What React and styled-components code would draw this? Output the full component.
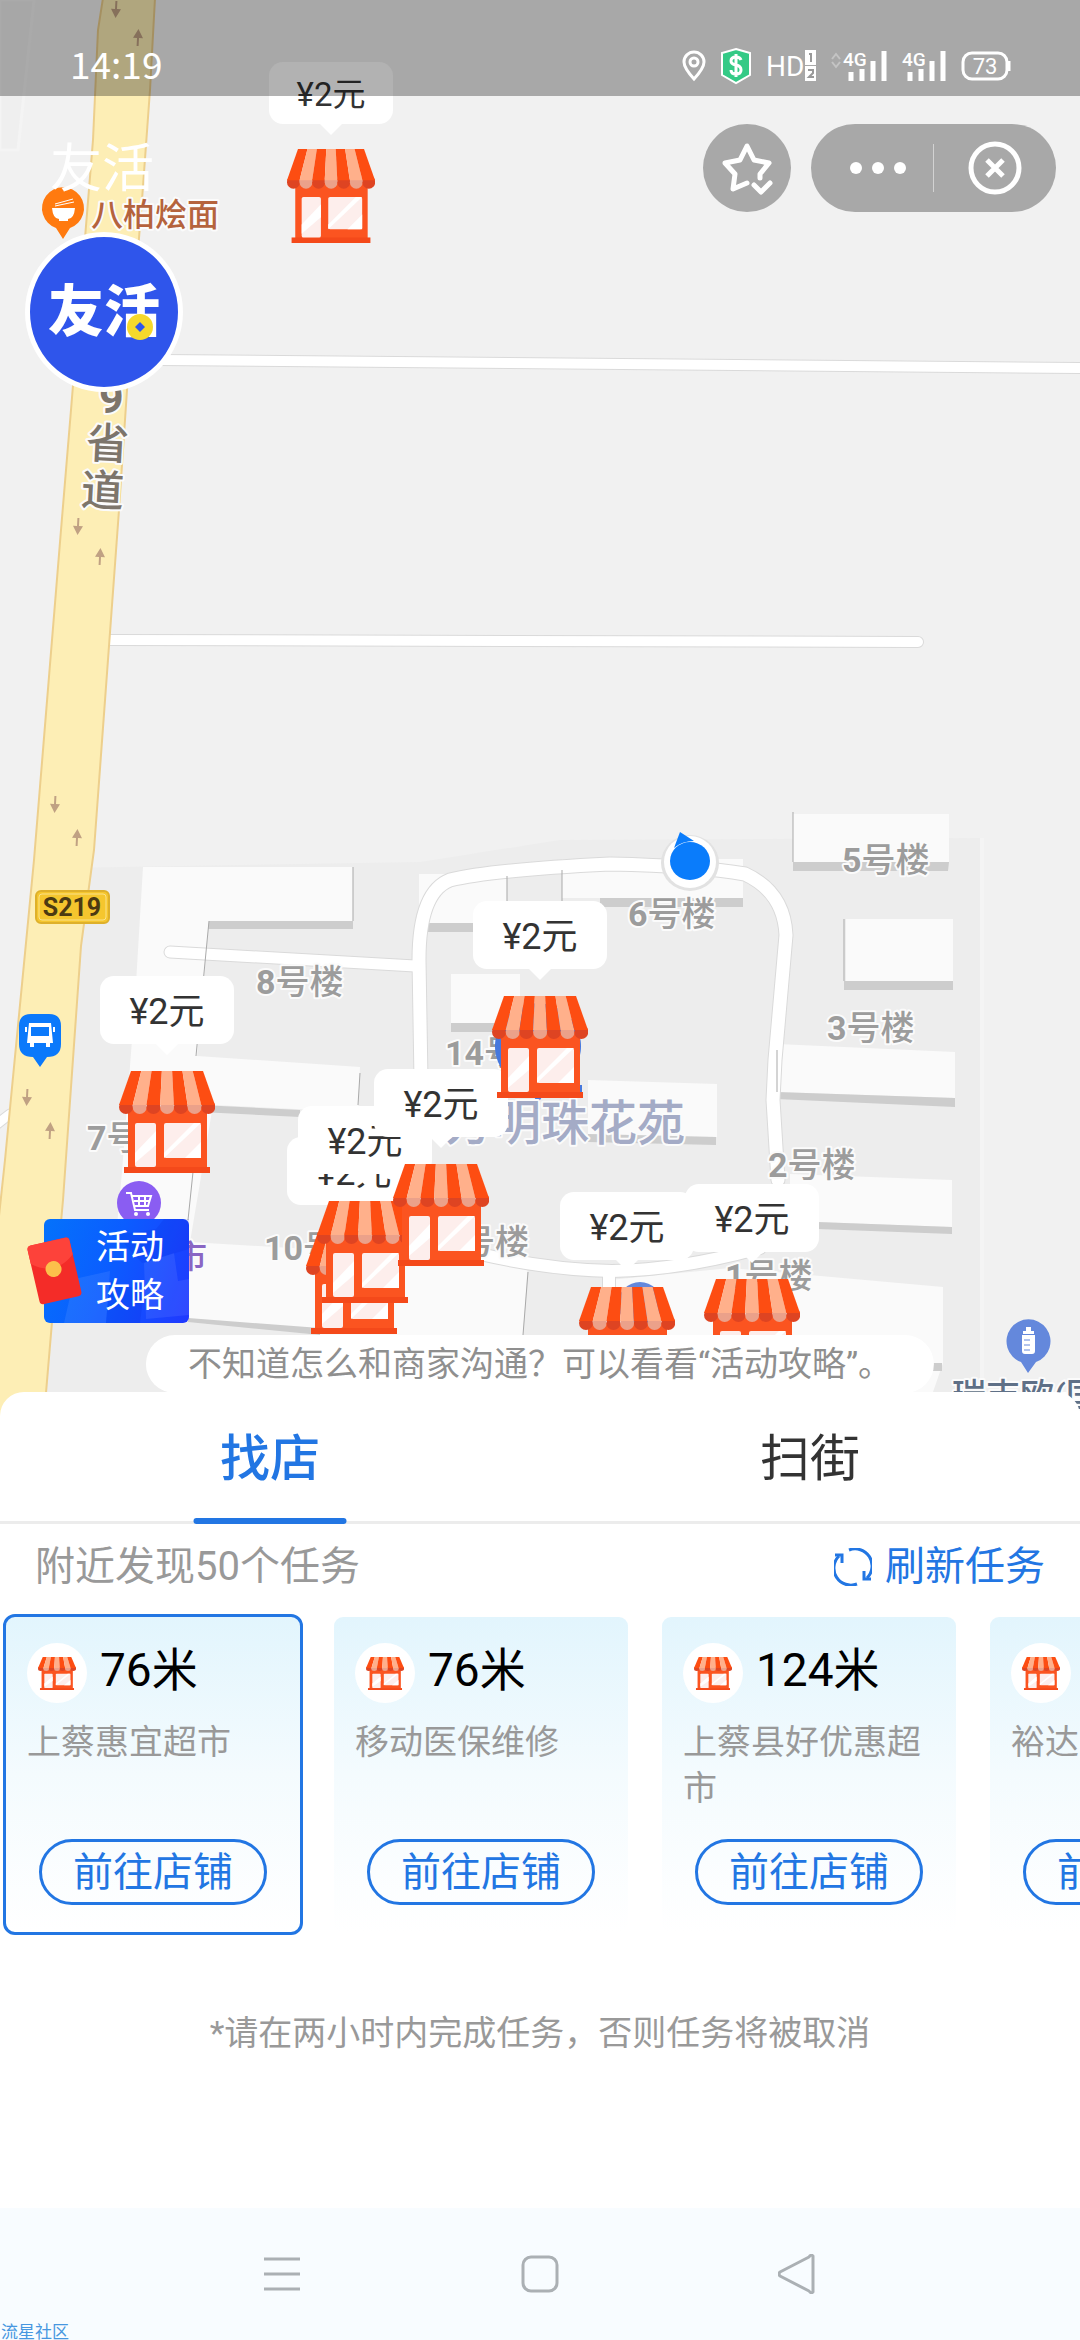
import React from "react";
import styled, { createGlobalStyle } from "styled-components";

const BLUE = "#2276e3";
const GREY = "#999999";
const FONT = 'Roboto, "Noto Sans CJK SC", sans-serif';

const GlobalStyle = createGlobalStyle`
  * { box-sizing: border-box; }
  body { margin: 0; background: #ffffff; font-family: ${FONT}; }
  button { margin: 0; padding: 0; border: 0; background: none; font: inherit; color: inherit; cursor: pointer; }
  svg { display: block; }
`;

const Page = styled.div`
  display: flex;
  flex-direction: column;
  min-height: 100vh;
  overflow: hidden;
`;

/* ---------- map ---------- */

const MapArea = styled.main`
  position: relative;
  flex: 1;
  min-height: 600px;
  background: #f1f1f1;
`;

const MapCanvas = styled.div`
  position: absolute;
  inset: 0 0 -24px;
  overflow: hidden;
`;

const MapDrawing = styled.svg`
  position: absolute;
  top: 0;
  left: 0;
  text { font-family: ${FONT}; }
`;

const Marker = styled.button`
  position: absolute;
  left: ${(p) => p.$x}px;
  top: ${(p) => p.$y}px;
  width: ${(p) => (p.$far ? 124 : 134)}px;
  display: flex;
  flex-direction: column;
  align-items: center;
  gap: ${(p) => (p.$far ? 25 : 27)}px;
  transform: translateX(-50%);
`;

const Bubble = styled.span`
  position: relative;
  width: 100%;
  padding-top: 4px;
  border-radius: 14px;
  background: #ffffff;
  color: #333333;
  font-size: ${(p) => (p.$far ? 33 : 36)}px;
  line-height: ${(p) => (p.$far ? 58 : 64)}px;
  text-align: center;

  &::after {
    content: "";
    position: absolute;
    left: 50%;
    top: 100%;
    border: 11px solid transparent;
    border-top-color: #ffffff;
    border-bottom: 0;
    transform: translateX(-50%);
  }
`;

const StatusBar = styled.header`
  position: relative;
  display: flex;
  align-items: center;
  justify-content: space-between;
  height: 96px;
  padding: 36px 69px 0 70px;
  background: rgba(0, 0, 0, 0.3);
  color: #ffffff;
`;

const Clock = styled.time`
  padding-bottom: 6px;
  font-family: "Noto Sans CJK SC", sans-serif;
  font-size: 37px;
  line-height: 54px;
`;

const StatusIcons = styled.div`
  display: flex;
  align-items: center;
  gap: 15px;
  svg { overflow: visible; }
  svg text { font-family: ${FONT}; fill: #ffffff; }
`;

const TitleBar = styled.div`
  position: relative;
  display: flex;
  align-items: center;
  justify-content: space-between;
  padding: 28px 24px 0 50px;
`;

const Title = styled.h1`
  margin: 0;
  padding-top: 4px;
  color: #ffffff;
  font-size: 52px;
  font-weight: 400;
  line-height: 84px;
`;

const Actions = styled.div`
  display: flex;
  gap: 20px;
`;

const RoundButton = styled.button`
  width: 88px;
  height: 88px;
  border-radius: 44px;
  background: #a8a8a8;
`;

const Capsule = styled.div`
  display: flex;
  align-items: center;
  height: 88px;
  border-radius: 44px;
  background: #a8a8a8;
`;

const CapsuleButton = styled.button`
  display: flex;
  align-items: center;
  justify-content: center;
  width: 122px;
  height: 88px;
  padding-left: ${(p) => (p.$shifted ? 12 : 0)}px;
`;

const Divider = styled.span`
  width: 1px;
  height: 48px;
  background: #d2d2d2;
`;

const Logo = styled.div`
  position: absolute;
  left: 25px;
  top: 232px;
  display: flex;
  align-items: center;
  justify-content: center;
  width: 158px;
  height: 160px;
  border: 5px solid #ffffff;
  border-radius: 50%;
  background: #2f55eb;
  color: #ffffff;
  font-size: 56px;
  font-weight: 900;
  line-height: 60px;
`;

const Coin = styled.svg`
  position: absolute;
  right: 24px;
  bottom: 46px;
`;

const GuideBanner = styled.button`
  position: absolute;
  left: 44px;
  top: 1219px;
  width: 145px;
  padding: 4px 24px 4px 52px;
  border-radius: 6px;
  background: linear-gradient(110deg, #0472fb 0%, #0b5dff 45%, #2038ff 100%);
  color: #ffffff;
  font-size: 34px;
  line-height: 48px;
  text-align: left;
`;

const BannerShine = styled.svg`
  position: absolute;
  inset: 0;
  width: 100%;
  height: 100%;
`;

const BannerText = styled.span`
  position: relative;
`;

const Envelope = styled.svg`
  position: absolute;
  left: -20px;
  top: 16px;
`;

const Tip = styled.p`
  position: absolute;
  left: 50%;
  bottom: -1px;
  transform: translateX(-50%);
  margin: 0;
  padding: 0 42px;
  border-radius: 29px;
  background: #ffffff;
  color: #8f8f8f;
  font-size: 34px;
  line-height: 58px;
  white-space: nowrap;
`;

/* ---------- sheet ---------- */

const Sheet = styled.section`
  position: relative;
  padding-bottom: 150px;
  border-radius: 24px 24px 0 0;
  background: #ffffff;
`;

const Tabs = styled.div`
  display: flex;
  height: 132px;
  border-bottom: 3px solid #ececec;
`;

const Tab = styled.button`
  position: relative;
  flex: 1;
  padding-top: 6px;
  color: ${(p) => (p.$active ? BLUE : "#333333")};
  font-size: 50px;
  font-weight: ${(p) => (p.$active ? 500 : 400)};
  line-height: 123px;

  &::after {
    content: "";
    position: absolute;
    left: 50%;
    bottom: -3px;
    width: 153px;
    height: 6px;
    border-radius: 3px;
    background: ${(p) => (p.$active ? BLUE : "transparent")};
    transform: translateX(-50%);
  }
`;

const Summary = styled.div`
  display: flex;
  align-items: center;
  justify-content: space-between;
  padding: 4px 35px 0;
  color: ${GREY};
  font-size: 40px;
  line-height: 78px;
`;

const Refresh = styled.button`
  display: flex;
  align-items: center;
  gap: 13px;
  color: ${BLUE};
`;

const CardList = styled.ul`
  display: flex;
  gap: 28px;
  margin: 8px 0 0;
  padding: 0 3px;
  list-style: none;
  overflow-x: auto;
  scrollbar-width: none;
`;

const Card = styled.li`
  flex: 0 0 300px;
  display: flex;
  flex-direction: column;
  padding: 26px 21px 27px;
  border: 3px solid ${(p) => (p.$selected ? BLUE : "transparent")};
  border-radius: 12px;
  background: linear-gradient(#e2f5fd, #f4fbfe 50%, #ffffff) padding-box;
`;

const CardHead = styled.div`
  display: flex;
  align-items: flex-start;
  gap: 13px;
  color: #000000;
  font-size: 46px;
  line-height: 54px;
`;

const Badge = styled.span`
  display: flex;
  align-items: center;
  justify-content: center;
  width: 60px;
  height: 60px;
  border-radius: 30px;
  background: #ffffff;
`;

const ShopName = styled.p`
  min-height: 92px;
  margin: 16px 0 28px;
  color: ${GREY};
  font-size: 34px;
  line-height: 46px;
`;

const GoButton = styled.button`
  align-self: center;
  width: 228px;
  padding-top: 2px;
  border: 3px solid ${BLUE};
  border-radius: 33px;
  color: ${BLUE};
  font-size: 40px;
  line-height: 58px;
`;

const Note = styled.p`
  margin: 73px 0 0;
  color: ${GREY};
  font-size: 34px;
  line-height: 50px;
  text-align: center;
`;

const NavBar = styled.nav`
  position: relative;
  display: flex;
  align-items: center;
  justify-content: center;
  gap: 218px;
  height: 132px;
  background: #f8fcff;
`;

const NavButton = styled.button`
  width: 40px;
  height: 40px;
`;

const Watermark = styled.span`
  position: absolute;
  left: 1px;
  bottom: 0;
  color: #4797e0;
  font-size: 17px;
  line-height: 16px;
`;

/* ---------- drawings ---------- */

const STRIPES = [0, 1, 2, 3, 4, 5, 6];
const topX = (i) => 12 + (i * 72) / 7;
const lowX = (i) => (i * 96) / 7;

function Store({ width, height }) {
  return (
    <svg width={width} height={height} viewBox="0 0 96 102" preserveAspectRatio="none" aria-hidden="true">
      <rect x="9" y="36" width="79" height="62" fill="#fb5420" />
      <rect x="5" y="96" width="86" height="6" fill="#f4491a" />
      <rect x="16" y="52" width="21" height="44" rx="2" fill="#fdeeec" />
      <rect x="45" y="52" width="37" height="35" rx="2" fill="#fdeeec" />
      <path d="M16 82L37 60V74L16 92ZM45 82L75 52H82L45 87ZM66 87L82 71V87Z" fill="#ffffff" />
      {STRIPES.map((i) => (
        <g key={i}>
          <circle cx={lowX(i) + 7} cy="36" r="7" fill={i % 2 ? "#eba18a" : "#de4422"} />
          <path
            d={`M${topX(i)} 0H${topX(i + 1)}L${lowX(i + 1)} 34H${lowX(i)}Z`}
            fill={i % 2 ? "#ffb08b" : "#fd4d12"}
          />
        </g>
      ))}
    </svg>
  );
}

const BLOCKS = [
  "M793 814H949V862H793Z",
  "M846 919H953V981H846Z",
  "M777 1044L955 1052V1098L777 1092Z",
  "M790 1174L952 1180V1227L790 1221Z",
  "M609 1280L730 1268L943 1287V1363L933 1392H609Z",
  "M562 859H743V898H562Z",
  "M419 874H507V923H419Z",
  "M143 867H353V921H209L197 1056L360 1067L358 1112L213 1105L190 1242L528 1262L523 1335H320L188 1320L110 1300L122 1172L135 1000Z",
  "M451 974H520V1023H451Z",
  "M588 1080L717 1084V1137L588 1134Z",
];

const SHADES = [
  "M793 862H949L948 871H793Z",
  "M844 981H953V990H844Z",
  "M776 1092L955 1098V1107L776 1099Z",
  "M790 1221L952 1227V1234L790 1228Z",
  "M933 1363H942V1371H933Z",
  "M600 898H743V907H600Z",
  "M419 923H480V932H419Z",
  "M209 921H353V929H208Z",
  "M200 1105L300 1110V1117L200 1112Z",
  "M188 1318L320 1328V1335L188 1322Z",
  "M451 1023H520V1032H451Z",
  "M588 1134L716 1137V1145L588 1142Z",
];

const ROADS = [
  ["M160 360L1080 368", 10],
  ["M107 640L918 642", 10],
  ["M170 952L415 966", 11],
  ["M421 1080L419 960Q419 892 450 880Q490 870 610 864Q700 866 745 874Q784 892 786 935L775 1060L773 1100L778 1180", 13],
  ["M480 1254Q550 1270 612 1271Q680 1270 760 1248", 12],
  ["M609 1272V1320", 12],
  ["M-8 1128L10 1114", 9],
];

const ARROWS = [
  [116, 9, 180], [138, 38, 0], [78, 526, 180], [100, 557, 0],
  [55, 804, 180], [77, 838, 0], [27, 1097, 180], [50, 1131, 0],
];

const BUILDING_LABELS = [
  ["5", 842, 872], ["6", 628, 926], ["3", 827, 1040], ["2", 768, 1177], ["1", 725, 1288],
  ["8", 256, 994], ["7", 87, 1150], ["14", 445, 1065], ["10", 264, 1260], ["", 461, 1254],
];

const halo = { stroke: "#fbfbfb", strokeWidth: 4, strokeLinejoin: "round", paintOrder: "stroke" };

function MapLayer() {
  return (
    <MapDrawing width="1080" height="1440" viewBox="0 0 1080 1440" aria-hidden="true">
      <path d="M0 0H34L18 150H0Z" fill="#efefef" stroke="#f4f4f4" strokeWidth="3" />
      <path d="M60 868L420 862L560 840L982 838V1440H40Z" fill="#ededed" />
      <path d="M982 838V1440" stroke="#f4f4f4" strokeWidth="4" />
      <path d={BLOCKS.join("")} fill="#fafafa" />
      <path d={SHADES.join("")} fill="#cdcdcd" />
      {ROADS.map(([d, w]) => (
        <path key={d} d={d} fill="none" stroke="#dadada" strokeWidth={w + 2} strokeLinecap="round" />
      ))}
      {ROADS.map(([d, w]) => (
        <path key={d} d={d} fill="none" stroke="#ffffff" strokeWidth={w} strokeLinecap="round" />
      ))}
      <path
        d="M353 867V921M209 921L196 1056M360 1073L358 1105M507 876V901M562 870V901M793 812V862M844 919V981M777 1050V1092M193 1172L188 1220M528 1272L523 1335"
        fill="none"
        stroke="#a9a9a9"
        strokeWidth="1"
      />
      <path
        d="M103 -2L98 30L93 140L71 410L61 530L34 860L5 1160L-10 1300V1440H42L52 1322L63 1200L81 946L94 850L119 510L127 390L142 200L150 90L155 -2Z"
        fill="#fdeeb5"
        stroke="#edcf8c"
        strokeWidth="2"
      />
      {ARROWS.map(([x, y, r]) => (
        <g key={y} transform={`translate(${x} ${y}) rotate(${r + 3})`}>
          <path d="M0 -9L5 0H1V8H-1V0H-5Z" fill="#c0a183" />
        </g>
      ))}

      <g fill="#7d756b" fontSize="43" fontWeight="700" {...halo}>
        <text x="99" y="413">9</text>
        <text x="86" y="459" fontWeight="500" transform="rotate(3 108 443)">省</text>
        <text x="81" y="506" fontWeight="500" transform="rotate(3 103 489)">道</text>
      </g>

      <path d="M63 239L56 228A21 21 0 1 1 70 228Z" fill="#ff7a0f" />
      <path d="M52 208H75Q74 219 68 219V221H59V219Q53 219 52 208Z" fill="#ffffff" />
      <path d="M55 206L74 202M55 204L73 199" stroke="#ffffff" strokeWidth="1" />
      <text x="91" y="226" fontSize="32" fontWeight="500" fill="#b5633d" {...halo}>八柏烩面</text>

      <rect x="36" y="891" width="73" height="32" rx="5" fill="#f5c62e" stroke="#deb02b" strokeWidth="2" />
      <rect x="39" y="894" width="67" height="26" rx="3" fill="none" stroke="#fbe28a" />
      <text x="72" y="916" fontSize="25" fontWeight="700" textAnchor="middle" fill="#4c3a12">S219</text>

      <path d="M31 1014H49Q61 1014 61 1026V1044Q61 1057 47 1057L40 1067L33 1057Q19 1057 19 1044V1026Q19 1014 31 1014Z" fill="#0b79fb" />
      <path d="M29 1023H51L53 1043H50V1047H46V1043H34V1047H30V1043H27ZM31 1027V1036H49V1027Z" fill="#ffffff" fillRule="evenodd" />
      <path d="M26 1032V1027M54 1032V1027" stroke="#ffffff" strokeWidth="2" />

      <circle cx="139" cy="1203" r="22" fill="#8a5df2" />
      <path d="M126 1193H131L135 1210H149M132 1196H151L148 1206H135M139 1197V1206M145 1197V1206M134 1201H149" fill="none" stroke="#ffffff" strokeWidth="2" />
      <circle cx="136" cy="1214" r="2" fill="#ffffff" />
      <circle cx="148" cy="1214" r="2" fill="#ffffff" />
      <text x="175" y="1268" fontSize="32" fontWeight="500" fill="#8a66c4" {...halo}>市</text>

      {BUILDING_LABELS.map(([n, x, y]) => (
        <text key={x} x={x} y={y} fontSize="34" fontWeight="500" fill="#9c9c9c" {...halo}>
          <tspan fontWeight="700">{n}</tspan>号楼
        </text>
      ))}

      <path d="M538 1103L528 1088A43 43 0 1 1 548 1088Z" fill="#4678dd" />
      <path d="M577 1085H582V1096H577Z" fill="#4678dd" />
      <text x="445" y="1140" fontSize="48" fontWeight="500" fill="#a4abc6" {...halo}>方明珠花苑</text>
      <circle cx="640" cy="1304" r="22" fill="#6488dc" />

      <path d="M1028 1373L1021 1362A22 22 0 1 1 1036 1362Z" fill="#6488dc" />
      <path d="M1026 1327H1031V1331H1034V1334H1023V1331H1026ZM1022 1335H1035V1351Q1035 1354 1032 1354H1025Q1022 1354 1022 1351Z" fill="#ffffff" />
      <path d="M1024 1340H1030M1024 1345H1030M1024 1350H1030" stroke="#6488dc" strokeWidth="1" />
      <text x="952" y="1408" fontSize="34" fontWeight="500" fill="#5f7087" {...halo}>瑞吉欧(国</text>

      <ellipse cx="690" cy="863" rx="29" ry="28" fill="#e2e2e2" />
      <circle cx="690" cy="862" r="26" fill="#ffffff" />
      <path d="M680 832L694 841Q682 841 674 848Z" fill="#0a7cfb" />
      <ellipse cx="690" cy="861" rx="20" ry="19" fill="#0a7cfb" />
    </MapDrawing>
  );
}

const MARKERS = [
  { x: 331, y: 62, far: true },
  { x: 354, y: 1137 },
  { x: 365, y: 1106 },
  { x: 441, y: 1069 },
  { x: 540, y: 901 },
  { x: 167, y: 976 },
  { x: 627, y: 1192 },
  { x: 752, y: 1184 },
];

const SHOPS = [
  { distance: "76米", name: "上蔡惠宜超市", selected: true },
  { distance: "76米", name: "移动医保维修" },
  { distance: "124米", name: "上蔡县好优惠超市" },
  { distance: "", name: "裕达" },
];

function Signal({ data }) {
  return (
    <svg width={data ? 56 : 44} height="32" viewBox={data ? "-12 0 56 32" : "0 0 44 32"} aria-label="4G">
      {data && <path d="M-11 9L-7 4L-3 9M-11 12L-7 17L-3 12" fill="none" stroke="#c4c4c4" strokeWidth="2" />}
      <text x="0" y="16" fontSize="19" fontWeight="500">4G</text>
      <path d="M8 22V31M19 19V31M30 11V31M41 1V31" stroke="#ffffff" strokeWidth="5" />
    </svg>
  );
}

export default function App() {
  const [tab, setTab] = React.useState(0);
  return (
    <Page>
      <GlobalStyle />
      <MapArea>
        <MapCanvas>
          <MapLayer />
          {MARKERS.map((m) => (
            <Marker key={`${m.x}-${m.y}`} type="button" $x={m.x} $y={m.y} $far={m.far}>
              <Bubble $far={m.far}>¥2元</Bubble>
              <Store width={m.far ? 88 : 96} height={m.far ? 94 : 102} />
            </Marker>
          ))}
          <GuideBanner type="button">
            <BannerShine viewBox="0 0 145 104" preserveAspectRatio="none" aria-hidden="true">
              <path d="M100 44L130 34L134 62L145 60V96L102 100ZM30 60L66 52L62 104H20Z" fill="#ffffff" opacity="0.08" />
              <path d="M72 16L112 10L120 0H145V30L98 44ZM66 62L100 72L96 104H62Z" fill="#0018c8" opacity="0.12" />
            </BannerShine>
            <Envelope width="60" height="72" viewBox="0 0 60 72" aria-hidden="true">
              <g transform="rotate(-13 30 36)">
                <rect x="9" y="6" width="43" height="60" rx="4" fill="#f42c28" />
                <path d="M9 10Q9 6 13 6H48Q52 6 52 10V24Q30 42 9 24Z" fill="#fd423a" />
                <circle cx="30" cy="34" r="8" fill="#fcc04b" />
              </g>
            </Envelope>
            <BannerText>活动攻略</BannerText>
          </GuideBanner>
        </MapCanvas>
        <StatusBar>
          <Clock>14:19</Clock>
          <StatusIcons>
            <svg width="24" height="32" viewBox="0 0 24 32" aria-label="定位">
              <path d="M12 29Q2 18 2 12A10 10 0 0 1 22 12Q22 18 12 29Z" fill="none" stroke="#ffffff" strokeWidth="3" />
              <circle cx="12" cy="12" r="4" fill="none" stroke="#ffffff" strokeWidth="3" />
            </svg>
            <svg width="30" height="36" viewBox="0 0 30 36" aria-label="支付保护">
              <path d="M15 1L29 5V27L15 35L1 27V5Z" fill="#34ca86" stroke="#ffffff" strokeWidth="2" />
              <path d="M20 12Q19 9 15 9Q10 9 10 13Q10 16 15 17Q20 18 20 22Q20 26 15 26Q10 26 10 22M15 6V29" fill="none" stroke="#ffffff" strokeWidth="3" />
            </svg>
            <svg width="50" height="32" viewBox="0 0 50 32" aria-label="HD">
              <text x="0" y="26" fontSize="28">HD</text>
              <rect x="39" y="0" width="11" height="15" fill="#ffffff" />
              <rect x="39" y="16" width="11" height="15" fill="#ffffff" />
              <path d="M43 4H45V12M42 20H47V23L43 27H48" fill="none" stroke="#999999" strokeWidth="2" />
            </svg>
            <Signal data />
            <Signal />
            <svg width="50" height="30" viewBox="0 0 50 30" aria-label="电量">
              <rect x="2" y="2" width="44" height="26" rx="9" fill="none" stroke="#ffffff" strokeWidth="3" />
              <path d="M48 10V20" stroke="#ffffff" strokeWidth="3" />
              <text x="24" y="23" fontSize="22" textAnchor="middle">73</text>
            </svg>
          </StatusIcons>
        </StatusBar>
        <TitleBar>
          <Title>友活</Title>
          <Actions>
            <RoundButton type="button" aria-label="收藏">
              <svg width="88" height="88" viewBox="0 0 88 88" fill="none" stroke="#ffffff" strokeWidth="5" strokeLinecap="round" strokeLinejoin="round">
                <path d="M57 54V50L66 39L51 36L44 22L37 36L22 39L32 50L30 65L44 59" />
                <path d="M51 61L58 68L67 59" />
              </svg>
            </RoundButton>
            <Capsule>
              <CapsuleButton type="button" aria-label="更多" $shifted>
                <svg width="58" height="14" viewBox="0 0 58 14" fill="#ffffff">
                  <circle cx="7" cy="7" r="6" />
                  <circle cx="29" cy="7" r="6" />
                  <circle cx="51" cy="7" r="6" />
                </svg>
              </CapsuleButton>
              <Divider />
              <CapsuleButton type="button" aria-label="关闭">
                <svg width="54" height="54" viewBox="0 0 54 54" fill="none" stroke="#ffffff" strokeWidth="5">
                  <circle cx="27" cy="27" r="24" />
                  <path d="M19 19L35 35M35 19L19 35" />
                </svg>
              </CapsuleButton>
            </Capsule>
          </Actions>
        </TitleBar>
        <Logo>
          友活
          <Coin width="28" height="28" viewBox="0 0 28 28" aria-hidden="true">
            <circle cx="14" cy="14" r="13" fill="#f6d92c" />
            <path d="M14 9L19 14L14 19L9 14Z" fill="#2f55eb" />
          </Coin>
        </Logo>
        <Tip>不知道怎么和商家沟通？可以看看“活动攻略”。</Tip>
      </MapArea>

      <Sheet>
        <Tabs role="tablist">
          {["找店", "扫街"].map((label, i) => (
            <Tab key={label} type="button" role="tab" aria-selected={tab === i} $active={tab === i} onClick={() => setTab(i)}>
              {label}
            </Tab>
          ))}
        </Tabs>
        <Summary>
          <span>附近发现50个任务</span>
          <Refresh type="button">
            <svg width="38" height="38" viewBox="0 0 38 38" fill="none" stroke={BLUE} strokeWidth="3" aria-hidden="true">
              <path d="M15 2A17 17 0 0 1 33 30M23 36A17 17 0 0 1 5 8" />
              <path d="M1 7H8V15M37 31H30V23" />
            </svg>
            刷新任务
          </Refresh>
        </Summary>
        <CardList>
          {SHOPS.map((s) => (
            <Card key={s.name} $selected={s.selected}>
              <CardHead>
                <Badge>
                  <Store width={38} height={33} />
                </Badge>
                {s.distance}
              </CardHead>
              <ShopName>{s.name}</ShopName>
              <GoButton type="button">前往店铺</GoButton>
            </Card>
          ))}
        </CardList>
        <Note>*请在两小时内完成任务，否则任务将被取消</Note>
      </Sheet>

      <NavBar>
        <NavButton type="button" aria-label="菜单">
          <svg width="40" height="40" viewBox="0 0 40 40" stroke="#abb0b4" strokeWidth="3">
            <path d="M2 5H38M2 20H38M2 35H38" />
          </svg>
        </NavButton>
        <NavButton type="button" aria-label="主页">
          <svg width="40" height="40" viewBox="0 0 40 40" fill="none" stroke="#abb0b4" strokeWidth="3">
            <rect x="3" y="3" width="34" height="34" rx="8" />
          </svg>
        </NavButton>
        <NavButton type="button" aria-label="返回">
          <svg width="40" height="40" viewBox="0 0 40 40" fill="none" stroke="#abb0b4" strokeWidth="3" strokeLinejoin="round">
            <path d="M35 2V38Q33 40 31 37L2 22Q0 20 2 18L31 3Q33 0 35 2Z" />
          </svg>
        </NavButton>
        <Watermark>流星社区</Watermark>
      </NavBar>
    </Page>
  );
}
